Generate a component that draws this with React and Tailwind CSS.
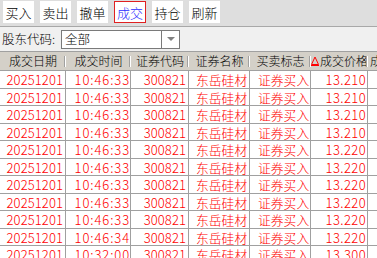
const rows = [
  ["10:46:33", "13.210"],
  ["10:46:33", "13.210"],
  ["10:46:33", "13.210"],
  ["10:46:33", "13.210"],
  ["10:46:33", "13.220"],
  ["10:46:33", "13.220"],
  ["10:46:33", "13.220"],
  ["10:46:33", "13.220"],
  ["10:46:33", "13.220"],
  ["10:46:34", "13.220"],
  ["10:32:00", "13.300"],
];

const tools = ["买入", "卖出", "撤单", "成交", "持仓", "刷新"];

const cjk = "font-['Noto_Sans_CJK_SC',sans-serif]";
const num = "text-[13px] tabular-nums leading-[17px] text-right";

function HeadCell({ w, children, last }) {
  return (
    <div className={`${w} relative flex h-full items-center justify-center shrink-0`}>
      {children}
      {!last && <span className="absolute right-0 top-[4px] h-[11px] w-[2px] border-l border-[#a0a0a0] border-r border-r-white" />}
    </div>
  );
}

export default function App() {
  return (
    <div className={`h-[258px] w-[377px] overflow-hidden bg-[#f0f0f0] font-light ${cjk}`}>
      <div className="flex h-[27px] items-start gap-[6px] border-b border-[#a8a8a8] bg-[#dedede] pl-[3px] pt-[1px]">
        {tools.map((t) => (
          <button
            key={t}
            className={
              "flex h-[22px] w-[31px] items-center justify-center bg-white text-[13px] leading-none " +
              (t === "成交" ? "w-[32px] border border-[#e02020] text-[#2b2bff]" : "text-black")
            }
          >
            {t}
          </button>
        ))}
      </div>

      <div className="flex h-[25px] items-center border-b border-[#a0a0a0] pl-[2px] text-[12.5px] text-black">
        <span className="w-[59px]">股东代码:</span>
        <div className="flex h-[19px] w-[119px] items-center border border-[#7a7a7a] bg-white">
          <span className="flex-1 pl-[3px] text-[12.5px]">全部</span>
          <div className="flex h-full w-[18px] items-center justify-center border-l border-[#7a7a7a]">
            <svg width="8" height="5" viewBox="0 0 8 5">
              <path d="M0 0h8L4 4z" fill="#808080" />
            </svg>
          </div>
        </div>
      </div>

      <div className="flex h-[19px] items-center border-b border-[#a0a0a0] bg-[#d4d0c8] text-[12px] text-black">
        <HeadCell w="w-[66px]">成交日期</HeadCell>
        <HeadCell w="w-[65px]">成交时间</HeadCell>
        <HeadCell w="w-[58px]">证券代码</HeadCell>
        <HeadCell w="w-[61px]">证券名称</HeadCell>
        <HeadCell w="w-[61px]">买卖标志</HeadCell>
        <HeadCell w="w-[57px]">
          <svg width="8" height="10" viewBox="0 0 8 10" className="mr-[1px]">
            <path d="M4 1L7.5 8.5H0.5z" fill="none" stroke="#ff0000" strokeWidth="1" />
            <path d="M0 9.5h8" stroke="#ff0000" strokeWidth="1" />
          </svg>
          成交价格
        </HeadCell>
        <HeadCell w="flex-1 justify-start pl-[2px]" last>
          成
        </HeadCell>
      </div>

      <div className="bg-white">
        {rows.map(([time, price], i) => (
          <div key={i} className="flex h-[17.5px] border-b border-[#a0a0a0] text-[#ff0000]">
            <div className={`w-[66px] shrink-0 border-r border-[#a0a0a0] pr-[2px] tracking-[0.1px] ${num}`}>20251201</div>
            <div className={`w-[65px] shrink-0 border-r border-[#a0a0a0] pr-[0px] tracking-[0.9px] ${num}`}>{time}</div>
            <div className={`w-[58px] shrink-0 border-r border-[#a0a0a0] pr-[2px] tracking-[0.1px] ${num}`}>300821</div>
            <div className="w-[61px] shrink-0 border-r border-[#a0a0a0] pl-[7px] text-[12.8px] leading-[17px]">东岳硅材</div>
            <div className="w-[61px] shrink-0 border-r border-[#a0a0a0] pl-[8px] text-[12.8px] leading-[17px]">证券买入</div>
            <div className={`w-[57px] shrink-0 border-r border-[#a0a0a0] pr-[1px] tracking-[0.4px] ${num}`}>{price}</div>
            <div className="flex-1" />
          </div>
        ))}
      </div>
    </div>
  );
}
